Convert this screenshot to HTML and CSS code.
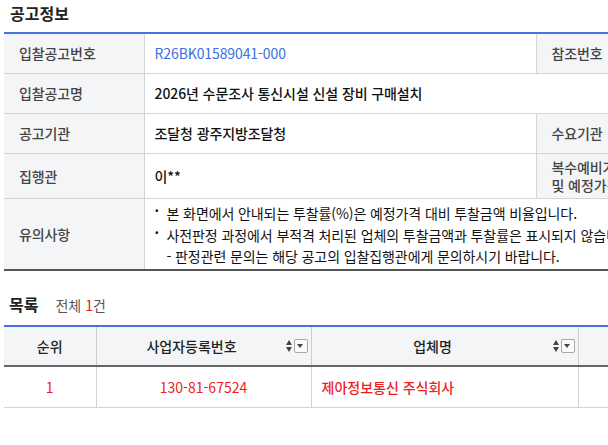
FILE: index.html
```html
<!DOCTYPE html>
<html lang="ko">
<head>
  <meta charset="UTF-8">
  <link rel="stylesheet" href="styles.css">
</head>
<body>
  <div class="page">
    <h2 class="section-title">공고정보</h2>
    <table class="info-table">
      <colgroup>
        <col class="col-label">
        <col class="col-value">
        <col class="col-label">
        <col class="col-value-right">
      </colgroup>
      <tr class="row">
        <th>입찰공고번호</th>
        <td class="link">R26BK01589041-000</td>
        <th>참조번호</th>
        <td></td>
      </tr>
      <tr class="row">
        <th>입찰공고명</th>
        <td colspan="3" class="strong">2026년 수문조사 통신시설 신설 장비 구매설치</td>
      </tr>
      <tr class="row">
        <th>공고기관</th>
        <td class="strong">조달청 광주지방조달청</td>
        <th>수요기관</th>
        <td></td>
      </tr>
      <tr class="row row-tall">
        <th>집행관</th>
        <td class="strong">이**</td>
        <th class="two-line">복수예비가격<br>및 예정가격</th>
        <td></td>
      </tr>
      <tr class="row row-notes">
        <th>유의사항</th>
        <td colspan="3">
          <ul class="notes">
            <li>본 화면에서 안내되는 투찰률(%)은 예정가격 대비 투찰금액 비율입니다.</li>
            <li>사전판정 과정에서 부적격 처리된 업체의 투찰금액과 투찰률은 표시되지 않습니다.</li>
            <li class="sub">- 판정관련 문의는 해당 공고의 입찰집행관에게 문의하시기 바랍니다.</li>
          </ul>
        </td>
      </tr>
    </table>

    <div class="list-head">
      <h2 class="section-title">목록</h2>
      <span class="total">전체 <em>1</em>건</span>
    </div>
    <table class="grid-table">
      <colgroup>
        <col class="g-rank">
        <col class="g-bizno">
        <col class="g-name">
        <col class="g-rest">
      </colgroup>
      <thead>
        <tr>
          <th>순위</th>
          <th class="sortable"><span>사업자등록번호</span><i class="sort"></i><i class="drop"></i></th>
          <th class="sortable"><span>업체명</span><i class="sort"></i><i class="drop"></i></th>
          <th></th>
        </tr>
      </thead>
      <tbody>
        <tr>
          <td class="center red">1</td>
          <td class="center red">130-81-67524</td>
          <td class="red name">제아정보통신 주식회사</td>
          <td></td>
        </tr>
      </tbody>
    </table>
  </div>
</body>
</html>
```

FILE: styles.css
```css
html, body {
  margin: 0;
  padding: 0;
  overflow: hidden;
  background: #fff;
}
body {
  font-family: "Noto Sans CJK KR", "Noto Sans", sans-serif;
  font-size: 14px;
  color: #222;
}
.page {
  width: 820px;
  padding: 0 4px;
}
.section-title {
  margin: 0;
  padding: 0 0 0 6px;
  font-size: 16px;
  font-weight: bold;
  line-height: 26px;
  color: #222;
}
.page > .section-title {
  height: 32px;
}

/* 공고정보 */
.info-table {
  width: 100%;
  border-collapse: collapse;
  border-top: 2px solid #4673e0;
  border-bottom: 2px solid #555;
}
.info-table col.col-label { width: 140px; }
.info-table col.col-value { width: 392px; }
.info-table th,
.info-table td {
  border-bottom: 1px solid #d4d4d4;
  padding: 0 10px;
  text-align: left;
  vertical-align: middle;
  line-height: 20px;
  letter-spacing: -0.1px;
}
.info-table th {
  background: #f4f5f7;
  color: #444;
  font-weight: 500;
  padding-left: 15px;
  border-right: 1px solid #d4d4d4;
}
.info-table td + th {
  border-left: 1px solid #d4d4d4;
}
.info-table .row { height: 40px; }
.info-table .row-tall { height: 45px; }
.info-table .row-notes { height: 72px; }
.info-table .two-line {
  line-height: 18px;
  padding-top: 1px;
  white-space: nowrap;
}
.info-table .link { color: #3c6fe0; }
.info-table .strong { color: #111; font-weight: 500; }
.notes {
  list-style: none;
  margin: 0;
  padding: 2px 0 1px;
  color: #111;
}
.notes li {
  position: relative;
  padding-left: 12px;
  line-height: 22px;
  white-space: nowrap;
}
.notes li::before {
  content: "·";
  position: absolute;
  left: 0;
  top: -3px;
  font-weight: bold;
}
.notes li.sub { line-height: 20px; }
.notes li.sub::before { content: none; }

/* 목록 */
.list-head {
  display: flex;
  align-items: baseline;
  gap: 17px;
  margin-top: 20px;
  height: 34px;
}
.list-head .section-title { padding-left: 5px; }
.total {
  font-size: 14px;
  color: #555;
}
.total em {
  font-style: normal;
  color: #e8141e;
}
.grid-table {
  width: 100%;
  border-collapse: collapse;
  border-top: 1px solid #d0d0d0;
}
.grid-table col.g-rank { width: 92px; }
.grid-table col.g-bizno { width: 215px; }
.grid-table col.g-name { width: 267px; }
.grid-table thead th {
  height: 38px;
  background: #f4f5f7;
  border-top: 2px solid #4673e0;
  border-bottom: 2px solid #666;
  border-right: 1px solid #cfcfcf;
  font-weight: 500;
  color: #222;
  text-align: center;
  padding: 0;
}
.grid-table th.sortable {
  position: relative;
  padding-right: 24px;
}
.grid-table i.sort {
  position: absolute;
  right: 18px;
  top: 50%;
  margin-top: -6px;
  width: 7px;
  height: 12px;
}
.grid-table i.sort::before,
.grid-table i.sort::after {
  content: "";
  position: absolute;
  left: 0;
  border-left: 3.5px solid transparent;
  border-right: 3.5px solid transparent;
}
.grid-table i.sort::before { top: 0; border-bottom: 5px solid #444; }
.grid-table i.sort::after { bottom: 0; border-top: 5px solid #444; }
.grid-table i.drop {
  position: absolute;
  right: 3px;
  top: 50%;
  margin-top: -7px;
  width: 12px;
  height: 12px;
  border: 1px solid #a8a8a8;
  border-radius: 2px;
  background: #fafafa;
}
.grid-table i.drop::after {
  content: "";
  position: absolute;
  left: 2.5px;
  top: 4px;
  border-left: 3.5px solid transparent;
  border-right: 3.5px solid transparent;
  border-top: 4px solid #444;
}
.grid-table tbody td {
  height: 40px;
  border-bottom: 1px solid #d4d4d4;
  border-right: 1px solid #d4d4d4;
  padding: 0 10px;
}
.grid-table .center { text-align: center; }
.grid-table .red { color: #ee1c25; }
.grid-table .name { font-weight: 500; }
```
